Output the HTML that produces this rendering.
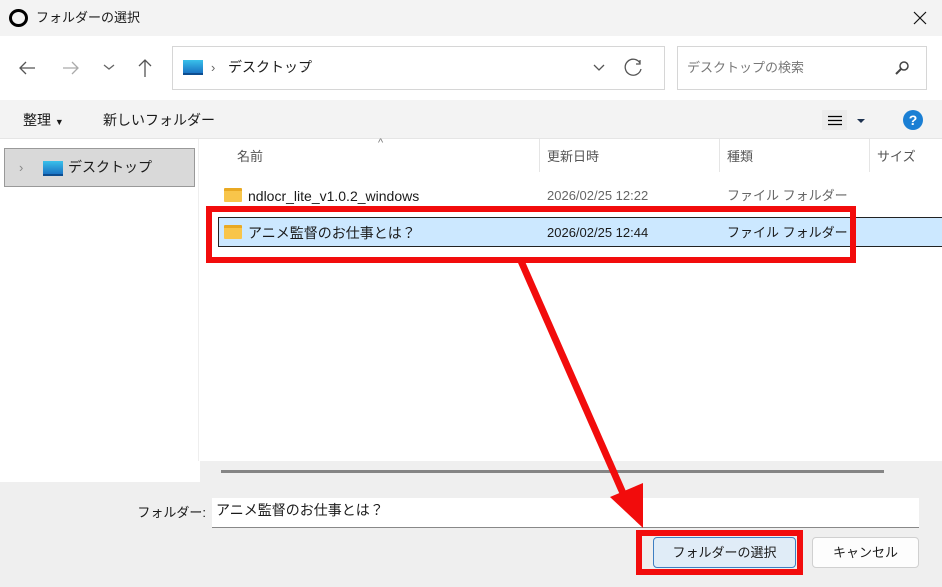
<!DOCTYPE html>
<html><head><meta charset="utf-8"><style>
*{margin:0;padding:0;box-sizing:border-box}
body{width:942px;height:587px;overflow:hidden;background:#fff;font-family:"Liberation Sans","Noto Sans CJK JP",sans-serif;font-size:13px;color:#1a1a1a;position:relative}
.a{position:absolute}
.t{white-space:nowrap;line-height:1}
</style></head><body>
<div class="a" style="left:0;top:0;width:942px;height:36px;background:#f3f3f3"></div>
<div class="a" style="left:9px;top:9px;width:19px;height:18px;border:3px solid #000;border-radius:50%"></div>
<div class="a t" style="left:36px;top:11px;font-size:13px">フォルダーの選択</div>
<svg class="a" style="left:912px;top:10px" width="16" height="16"><path d="M2 2L14 14M14 2L2 14" stroke="#111" stroke-width="1.2"/></svg>

<svg class="a" style="left:0;top:36px" width="172" height="64"><g stroke="#555" stroke-width="1.3" fill="none"><path d="M20 32h15M26 26l-6 6 6 6"/><path d="M63 32h15M72 26l6 6-6 6" stroke="#aaa"/><path d="M104 29l5 4 5-4" stroke="#666"/><path d="M145 41V24M139 30l6-6 6 6"/></g></svg>
<div class="a" style="left:172px;top:46px;width:493px;height:44px;border:1px solid #d6d6d6"></div>
<div class="a" style="left:183px;top:60px;width:20px;height:15px;background:linear-gradient(#39c1ea,#1a74c4);border-bottom:2px solid #0d4d8f"></div>
<div class="a t" style="left:211px;top:61px;color:#666">›</div>
<div class="a t" style="left:228px;top:60px;font-size:14px">デスクトップ</div>
<div class="a t" style="left:303px;top:61px;color:#666">›</div>
<svg class="a" style="left:588px;top:56px" width="60" height="24"><path d="M6 9l5 5 5-5" stroke="#555" fill="none" stroke-width="1.3"/><path d="M55 6a8 8 0 1 0 1 6M55 3v4h-4" stroke="#555" fill="none" stroke-width="1.3" transform="translate(-3,1)"/></svg>
<div class="a" style="left:677px;top:46px;width:250px;height:44px;border:1px solid #d6d6d6"></div>
<div class="a t" style="left:687px;top:61px;color:#777">デスクトップの検索</div>
<svg class="a" style="left:894px;top:60px" width="16" height="16"><circle cx="10" cy="6" r="4" stroke="#444" fill="none" stroke-width="1.5"/><path d="M7 9l-5 5" stroke="#444" stroke-width="2"/></svg>

<div class="a" style="left:0;top:100px;width:942px;height:39px;background:#f3f3f3;border-bottom:1px solid #e5e5e5"></div>
<div class="a t" style="left:23px;top:113px;font-size:14px">整理 <span style="font-size:9px">▼</span></div>
<div class="a t" style="left:103px;top:113px;font-size:14px">新しいフォルダー</div>
<div class="a" style="left:822px;top:110px;width:25px;height:20px;background:#ececec"></div>
<svg class="a" style="left:827px;top:113px" width="45" height="16"><path d="M1 3.5h14M1 7.5h14M1 11.5h14" stroke="#000" stroke-width="1.2"/><path d="M30 6h8l-4 4z" fill="#1e3250"/></svg>
<div class="a" style="left:903px;top:110px;width:20px;height:20px;border-radius:50%;background:#1a7fd4;color:#fff;font-weight:bold;font-size:14px;text-align:center;line-height:20px">?</div>

<div class="a" style="left:198px;top:139px;width:1px;height:322px;background:#eee"></div>
<div class="a" style="left:4px;top:148px;width:191px;height:39px;background:#d9d9d9;border:1px solid #999"></div>
<div class="a t" style="left:19px;top:161px;color:#888">›</div>
<div class="a" style="left:43px;top:161px;width:20px;height:15px;background:linear-gradient(#39c1ea,#1a74c4);border-bottom:2px solid #0d4d8f"></div>
<div class="a t" style="left:68px;top:160px;font-size:14px">デスクトップ</div>

<div class="a t" style="left:378px;top:138px;color:#777;font-size:11px">^</div>
<div class="a t" style="left:237px;top:150px;color:#555">名前</div>
<div class="a" style="left:539px;top:139px;width:1px;height:33px;background:#e5e5e5"></div>
<div class="a t" style="left:547px;top:150px;color:#555">更新日時</div>
<div class="a" style="left:719px;top:139px;width:1px;height:33px;background:#e5e5e5"></div>
<div class="a t" style="left:727px;top:150px;color:#555">種類</div>
<div class="a" style="left:869px;top:139px;width:1px;height:33px;background:#e5e5e5"></div>
<div class="a t" style="left:877px;top:150px;color:#555">サイズ</div>

<div class="a" style="left:224px;top:188px;width:18px;height:14px;background:#f8c54a;border-top:3px solid #e9a923;border-radius:1px"></div>
<div class="a t" style="left:248px;top:189px;font-size:14px">ndlocr_lite_v1.0.2_windows</div>
<div class="a t" style="left:547px;top:189px;color:#666">2026/02/25 12:22</div>
<div class="a t" style="left:727px;top:189px;color:#666">ファイル フォルダー</div>

<div class="a" style="left:218px;top:217px;width:730px;height:30px;background:#cce8ff;border:1px solid #222"></div>
<div class="a" style="left:224px;top:225px;width:18px;height:14px;background:#f8c54a;border-top:3px solid #e9a923;border-radius:1px"></div>
<div class="a t" style="left:248px;top:226px;font-size:14px">アニメ監督のお仕事とは？</div>
<div class="a t" style="left:547px;top:226px">2026/02/25 12:44</div>
<div class="a t" style="left:727px;top:226px">ファイル フォルダー</div>

<div class="a" style="left:200px;top:461px;width:742px;height:22px;background:#efefef"></div>
<div class="a" style="left:221px;top:470px;width:663px;height:3px;background:#858585"></div>
<div class="a" style="left:0;top:482px;width:942px;height:105px;background:#efefef"></div>
<div class="a t" style="right:736px;top:506px">フォルダー:</div>
<div class="a" style="left:212px;top:498px;width:707px;height:30px;background:#fff;border-bottom:1px solid #888"></div>
<div class="a t" style="left:216px;top:503px;font-size:14px">アニメ監督のお仕事とは？</div>
<div class="a" style="left:653px;top:537px;width:143px;height:31px;background:#e0ecf7;border:1px solid #3e7ec2;border-radius:4px;text-align:center;line-height:29px">フォルダーの選択</div>
<div class="a" style="left:812px;top:537px;width:107px;height:31px;background:#fdfdfd;border:1px solid #d0d0d0;border-radius:4px;text-align:center;line-height:29px">キャンセル</div>

<div class="a" style="left:206px;top:206px;width:650px;height:57px;border:6px solid #f20c0c"></div>
<div class="a" style="left:636px;top:530px;width:167px;height:45px;border:6px solid #f20c0c"></div>
<svg class="a" style="left:0;top:0" width="942" height="587"><path d="M521 261L626 500" stroke="#f20c0c" stroke-width="7"/><path d="M610 497L643 483L643 528z" fill="#f20c0c"/></svg>
</body></html>
